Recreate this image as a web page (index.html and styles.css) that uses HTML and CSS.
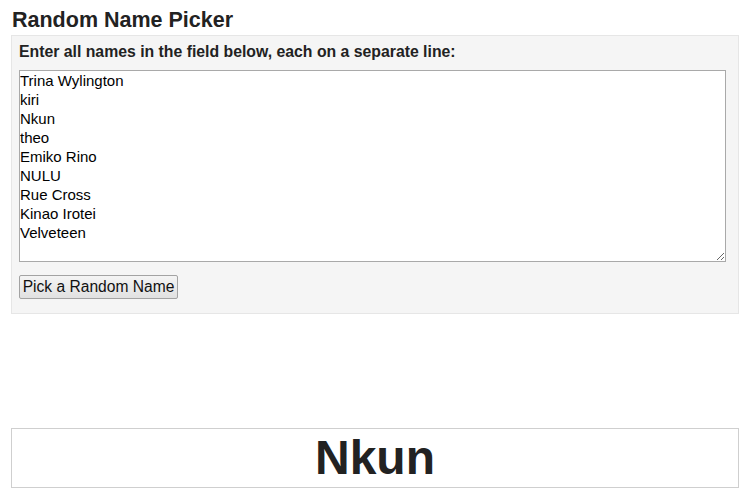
FILE: index.html
```html
<!DOCTYPE html>
<html>
<head>
<meta charset="utf-8">
<title>Random Name Picker</title>
<link rel="stylesheet" href="styles.css">
</head>
<body>
<div class="page">
  <h1 class="title">Random Name Picker</h1>
  <div class="panel">
    <label class="label" for="names">Enter all names in the field below, each on a separate line:</label>
    <textarea id="names" class="names" rows="10">Trina Wylington
kiri
Nkun
theo
Emiko Rino
NULU
Rue Cross
Kinao Irotei
Velveteen</textarea>
    <div class="actions"><button class="pick" type="button">Pick a Random Name</button></div>
  </div>
  <div class="result">Nkun</div>
</div>
</body>
</html>
```
FILE: styles.css
```css
html, body {
  margin: 0;
  padding: 0;
  background: #fff;
}
body {
  font-family: "Liberation Sans", Arial, sans-serif;
  color: #222;
}
.page {
  width: 728px;
  margin-left: 11px;
  padding-top: 8px;
}
.title {
  margin: 0 0 0 1px;
  font-size: 21.5px;
  line-height: 24px;
  font-weight: bold;
  color: #222;
}
.panel {
  margin-top: 3px;
  background: #f5f5f5;
  border: 1px solid #e6e6e6;
  padding: 7px 7px 14px 7px;
}
.label {
  display: block;
  font-size: 15.8px;
  line-height: 18px;
  font-weight: bold;
  color: #222;
}
.names {
  display: block;
  box-sizing: border-box;
  width: 707px;
  height: 192px;
  margin: 9px 0 0 0;
  padding: 0 1px 0 0;
  border: 1px solid #a9a9a9;
  font-family: "Liberation Sans", Arial, sans-serif;
  font-size: 15px;
  line-height: 19px;
  color: #000;
  background: #fff;
  resize: both;
}
.actions {
  margin-top: 13px;
  display: flex;
}
.pick {
  box-sizing: border-box;
  height: 24px;
  width: 159px;
  padding: 0;
  white-space: nowrap;
  font-family: "Liberation Sans", Arial, sans-serif;
  font-size: 15.6px;
  line-height: 20px;
  color: #111;
  border: 1px solid #a3a3a3;
  border-radius: 2px;
  background: linear-gradient(#f4f4f4, #e1e1e1);
}
.result {
  margin-top: 114px;
  border: 1px solid #cfcfcf;
  height: 58px;
  line-height: 58px;
  text-align: center;
  font-size: 48px;
  font-weight: bold;
  color: #222;
}
```
